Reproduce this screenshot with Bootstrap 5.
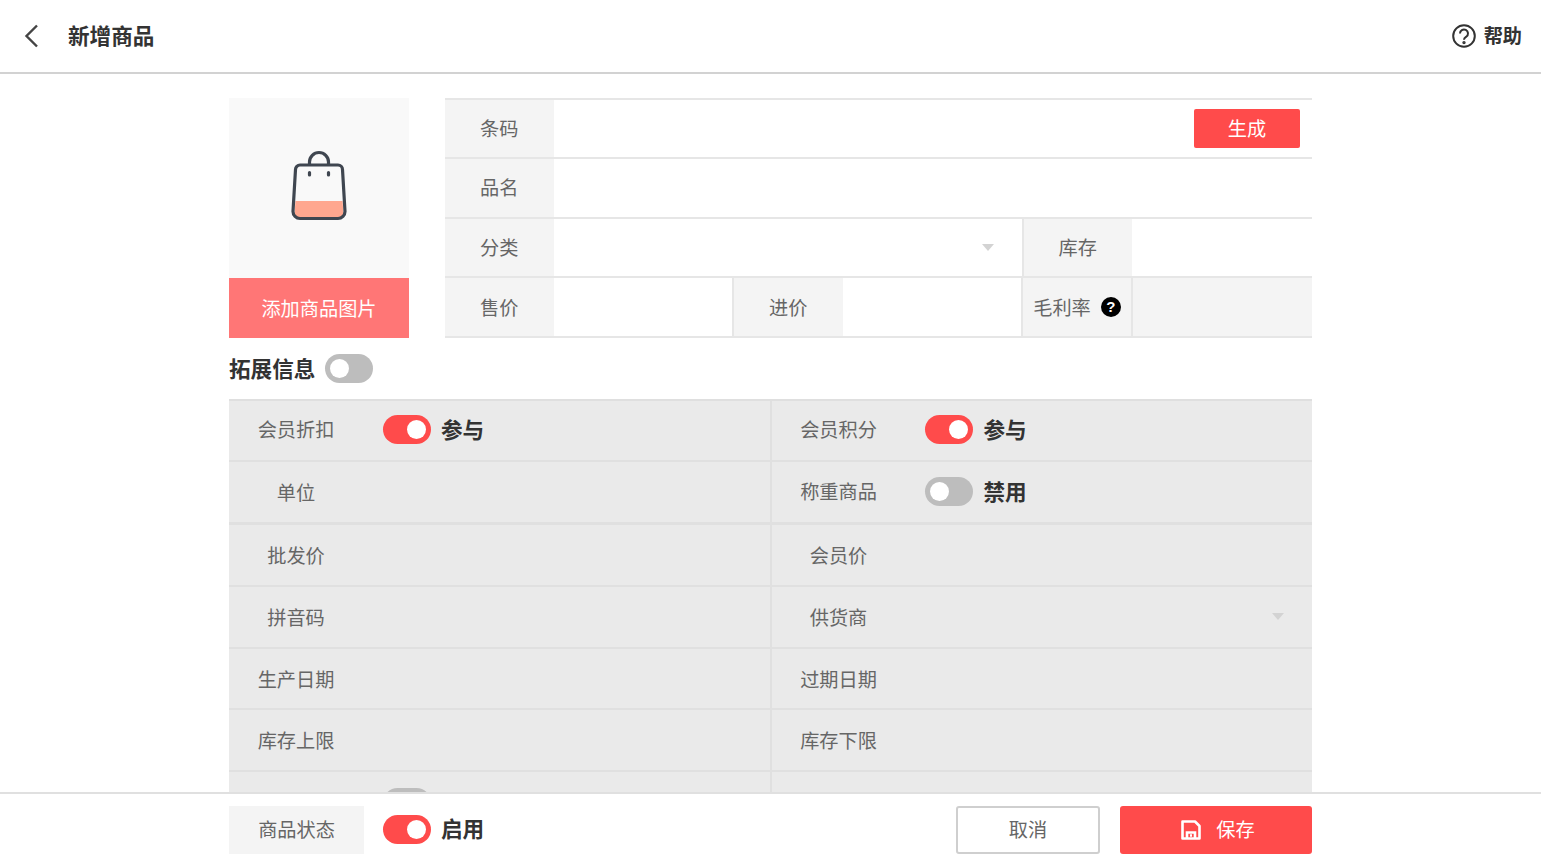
<!DOCTYPE html>
<html lang="zh-CN">
<head>
<meta charset="utf-8">
<title>新增商品</title>
<link href="https://cdn.jsdelivr.net/npm/bootstrap@5.3.0/dist/css/bootstrap.min.css" rel="stylesheet">
<style>
html,body{height:100%;overflow:hidden;}
body{font-family:"Noto Sans CJK SC","Noto Sans",sans-serif;font-size:19.2px;color:#666;background:#fff;}
.shell{height:866px;}
.topbar{height:74px;border-bottom:2px solid #d2d2d2;padding:0 19px 0 24px;flex:none;}
.topbar-title{font-size:21.6px;font-weight:700;color:#333;margin-left:28px;padding-bottom:2px;}
.topbar-help{font-weight:700;color:#333;gap:8px;}
.topbar-help span{padding-bottom:2px;}
.body-area{flex:1 1 auto;min-height:0;overflow:hidden;padding:24px 229px 0;}
.pic-col{width:180px;flex:none;margin-right:36px;}
.pic-box{height:180px;background:#f9f9f9;padding-bottom:5px;}
.pic-btn{height:60px;background:#ff7676;color:#fff;border:0;width:100%;border-radius:0;font-size:19.2px;padding:0;}
.pic-btn:hover{background:#ff7676;color:#fff;}
.base-form{flex:1 1 auto;border-top:2px solid #e6e6e6;}
.base-row{height:59.67px;border-bottom:2px solid #e6e6e6;}
.base-row:first-child{height:59px;}
.lbl{width:108.500px;flex:none;background:#f4f4f4;line-height:1;}
.cell-grow{flex:1 1 auto;min-width:0;}
.gen-btn{width:106px;height:39px;background:#ff4b4b;color:#fff;border:0;border-radius:2px;font-size:19.2px;padding:0;margin-right:12px;}
.gen-btn:hover{background:#ff4b4b;color:#fff;}
.caret-down{width:0;height:0;border-left:6px solid transparent;border-right:6px solid transparent;border-top:7px solid #d3d3d3;}
.cat-cell{width:470px;flex:none;border-right:2px solid #e6e6e6;padding-right:28px;}
.price-cell{width:180.500px;flex:none;border-right:2px solid #e6e6e6;}
.cost-cell{width:180.500px;flex:none;border-right:2px solid #e6e6e6;}
.margin-lbl{width:110px;flex:none;background:#f4f4f4;border-right:2px solid #e6e6e6;gap:10px;}
.margin-val{flex:1 1 auto;background:#f4f4f4;}
.qmark{width:20px;height:20px;border-radius:50%;background:#000;color:#fff;font-size:15px;font-weight:700;line-height:20px;text-align:center;font-family:"Liberation Sans",sans-serif;}
.ext-head{height:61px;font-weight:700;color:#333;font-size:21.6px;gap:10px;}
.sw{width:48px;height:29px;border-radius:15px;background:#bdbdbd;position:relative;flex:none;}
.sw::after{content:"";position:absolute;left:5px;top:5px;width:19px;height:19px;border-radius:50%;background:#fff;}
.sw-on{background:#ff4b4b;}
.sw-on::after{left:24px;}
.ext-grid{background:#eaeaea;border-top:2px solid #dfdfdf;}
.ext-row{height:61.75px;border-bottom:2px solid #e0e0e0;}
.ext-row:first-child{height:61px;}
.ext-row.heavy{height:63px;border-bottom-width:3px;}
.low-text .ext-name{padding-top:2px;}
.low-sw .sw{margin-top:1px;}
.ext-cell{width:calc(50% - 1px);flex:none;padding-left:28.500px;gap:48.500px;}
.ext-cell.with-sw{padding-bottom:2px;}
.ext-cell + .ext-cell{width:calc(50% + 1px);border-left:2px solid #e0e0e0;padding-left:28.500px;gap:47.500px;}
.ext-cell.has-caret{padding-right:28px;}
.ext-name{width:77px;flex:none;white-space:nowrap;display:flex;justify-content:center;}
.sw-text{color:#333;font-weight:700;font-size:21.6px;margin-left:-38.500px;}
.ext-cell + .ext-cell .sw-text{margin-left:-36.500px;}
.foot{height:74px;border-top:2px solid #e0e0e0;background:#fff;padding:12px 229px;flex:none;}
.status-lbl{width:135px;height:48px;background:#f4f4f4;padding-bottom:2px;}
.sw-wrap{gap:10px;margin-left:19px;}
.sw-label{color:#333;font-weight:700;font-size:21.6px;padding-bottom:3px;}
.cancel-btn{width:144px;height:48px;background:#fff;border:2px solid #cfcfcf;border-radius:3px;color:#666;font-size:19.2px;padding:0 0 2px;margin-right:20px;}
.save-btn{width:192px;height:48px;background:#ff4b4b;border:0;border-radius:3px;color:#fff;font-size:19.2px;padding:0 0 0 4px;gap:15px;}
.save-btn span{padding-bottom:2px;}
.save-btn:hover{background:#ff4b4b;color:#fff;}
</style>
</head>
<body>
<div class="shell d-flex flex-column">
  <header class="topbar d-flex align-items-center justify-content-between">
    <div class="d-flex align-items-center">
      <svg width="16" height="24" viewBox="0 0 16 24" fill="none" stroke="#444" stroke-width="2.400"><path d="M13 1.500 2.500 12 13 22.500"/></svg>
      <span class="topbar-title">新增商品</span>
    </div>
    <div class="topbar-help d-flex align-items-center">
      <svg width="24" height="24" viewBox="0 0 24 24" fill="none" stroke="#333" stroke-width="2"><circle cx="12" cy="12" r="10.800"/><path d="M8 9.500a4 4 0 1 1 6.300 3.200c-1.500 1-2.300 1.400-2.300 3"/><circle cx="12" cy="18.600" r=".7" fill="#333"/></svg>
      <span>帮助</span>
    </div>
  </header>

  <main class="body-area">
    <div class="d-flex">
      <div class="pic-col">
        <div class="pic-box d-flex align-items-center justify-content-center">
          <svg width="56" height="72" viewBox="0 0 56 72" fill="none">
            <path d="M4.500 51H51.500L52.500 63a4.500 4.500 0 0 1-4.500 4.500H8A4.500 4.500 0 0 1 3.500 63Z" fill="#ffa78f"/>
            <path d="M9 15H47a4.500 4.500 0 0 1 4.500 4.500L54 61.500a7 7 0 0 1-7 7H9a7 7 0 0 1-7-7L4.500 19.500A4.500 4.500 0 0 1 9 15Z" stroke="#3f4650" stroke-width="3.200"/>
            <path d="M18.500 14.500V12a9.500 9.500 0 0 1 19 0v2.500" stroke="#3f4650" stroke-width="3.200"/>
            <path d="M18.500 22.500v2.500M37.500 22.500v2.500" stroke="#3f4650" stroke-width="3.200" stroke-linecap="round"/>
          </svg>
        </div>
        <button class="btn pic-btn">添加商品图片</button>
      </div>
      <div class="base-form">
        <div class="base-row d-flex">
          <div class="lbl d-flex align-items-center justify-content-center">条码</div>
          <div class="cell-grow d-flex align-items-center justify-content-end"><button class="btn gen-btn">生成</button></div>
        </div>
        <div class="base-row d-flex">
          <div class="lbl d-flex align-items-center justify-content-center">品名</div>
          <div class="cell-grow"></div>
        </div>
        <div class="base-row d-flex">
          <div class="lbl d-flex align-items-center justify-content-center">分类</div>
          <div class="cat-cell d-flex align-items-center justify-content-end"><span class="caret-down"></span></div>
          <div class="lbl d-flex align-items-center justify-content-center">库存</div>
          <div class="cell-grow"></div>
        </div>
        <div class="base-row d-flex">
          <div class="lbl d-flex align-items-center justify-content-center">售价</div>
          <div class="price-cell"></div>
          <div class="lbl d-flex align-items-center justify-content-center">进价</div>
          <div class="cost-cell"></div>
          <div class="margin-lbl d-flex align-items-center justify-content-center"><span>毛利率</span><span class="qmark">?</span></div>
          <div class="margin-val"></div>
        </div>
      </div>
    </div>

    <div class="ext-head d-flex align-items-center"><span>拓展信息</span><span class="sw"></span></div>

    <div class="ext-grid">
      <div class="ext-row d-flex">
        <div class="ext-cell with-sw d-flex align-items-center"><span class="ext-name">会员折扣</span><span class="sw sw-on"></span><span class="sw-text">参与</span></div>
        <div class="ext-cell with-sw d-flex align-items-center"><span class="ext-name">会员积分</span><span class="sw sw-on"></span><span class="sw-text">参与</span></div>
      </div>
      <div class="ext-row heavy d-flex">
        <div class="ext-cell d-flex align-items-center"><span class="ext-name">单位</span></div>
        <div class="ext-cell with-sw d-flex align-items-center"><span class="ext-name">称重商品</span><span class="sw"></span><span class="sw-text">禁用</span></div>
      </div>
      <div class="ext-row low-text d-flex">
        <div class="ext-cell d-flex align-items-center"><span class="ext-name">批发价</span></div>
        <div class="ext-cell d-flex align-items-center"><span class="ext-name">会员价</span></div>
      </div>
      <div class="ext-row low-text d-flex">
        <div class="ext-cell d-flex align-items-center"><span class="ext-name">拼音码</span></div>
        <div class="ext-cell has-caret d-flex align-items-center justify-content-between"><span class="ext-name">供货商</span><span class="caret-down"></span></div>
      </div>
      <div class="ext-row low-text d-flex">
        <div class="ext-cell d-flex align-items-center"><span class="ext-name">生产日期</span></div>
        <div class="ext-cell d-flex align-items-center"><span class="ext-name">过期日期</span></div>
      </div>
      <div class="ext-row d-flex">
        <div class="ext-cell d-flex align-items-center"><span class="ext-name">库存上限</span></div>
        <div class="ext-cell d-flex align-items-center"><span class="ext-name">库存下限</span></div>
      </div>
      <div class="ext-row low-sw d-flex">
        <div class="ext-cell d-flex align-items-center"><span class="ext-name"></span><span class="sw"></span></div>
        <div class="ext-cell d-flex align-items-center"></div>
      </div>
    </div>
  </main>

  <footer class="foot d-flex align-items-center justify-content-between">
    <div class="d-flex align-items-center">
      <div class="status-lbl d-flex align-items-center justify-content-center">商品状态</div>
      <div class="sw-wrap d-flex align-items-center"><span class="sw sw-on"></span><span class="sw-label">启用</span></div>
    </div>
    <div class="d-flex align-items-center">
      <button class="btn cancel-btn">取消</button>
      <button class="btn save-btn d-inline-flex align-items-center justify-content-center">
        <svg width="20" height="20" viewBox="0 0 20 20" fill="none" stroke="#fff" stroke-width="2.600"><path d="M1.500 1.500H14L18.500 6V18.500H1.500Z" stroke-linejoin="round"/><path d="M6 18V12.500H14V18M9 15.500h2"/></svg>
        <span>保存</span>
      </button>
    </div>
  </footer>
</div>
<script src="https://cdn.jsdelivr.net/npm/bootstrap@5.3.0/dist/js/bootstrap.bundle.min.js"></script>
</body>
</html>
